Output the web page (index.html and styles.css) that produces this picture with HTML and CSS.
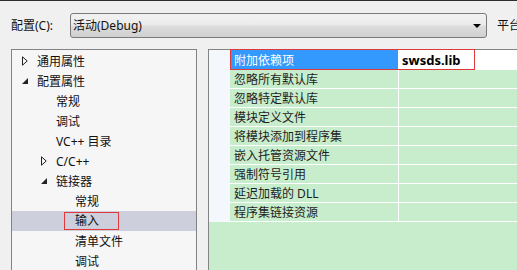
FILE: index.html
```html
<!DOCTYPE html>
<html lang="zh-CN">
<head>
  <meta charset="UTF-8" />
  <title>属性页</title>
  <link rel="stylesheet" href="styles.css">
</head>
<body>

  <!-- 顶部: 配置 / 平台 -->
  <div class="toolbar">
    <span class="label">配置(C):</span>
    <div class="combo">
      <span>活动(Debug)</span>
      <span class="combo-arrow"></span>
    </div>
    <span class="label platform">平台</span>
  </div>

  <div class="main">
    <!-- 左侧树 -->
    <div class="tree">
      <div class="node lv0"><span class="exp"><svg width="6" height="10" viewBox="0 0 6 10"><path d="M0.5 0.8 L5.2 5 L0.5 9.2 Z" fill="none" stroke="#222" stroke-width="1"/></svg></span>通用属性</div>
      <div class="node lv0"><span class="exp"><svg width="7" height="7" viewBox="0 0 7 7"><path d="M6 0 L6 6 L0 6 Z" fill="#222"/></svg></span>配置属性</div>
      <div class="node lv1"><span class="exp"></span>常规</div>
      <div class="node lv1"><span class="exp"></span>调试</div>
      <div class="node lv1"><span class="exp"></span>VC++ 目录</div>
      <div class="node lv1"><span class="exp"><svg width="6" height="10" viewBox="0 0 6 10"><path d="M0.5 0.8 L5.2 5 L0.5 9.2 Z" fill="none" stroke="#222" stroke-width="1"/></svg></span>C/C++</div>
      <div class="node lv1"><span class="exp"><svg width="7" height="7" viewBox="0 0 7 7"><path d="M6 0 L6 6 L0 6 Z" fill="#222"/></svg></span>链接器</div>
      <div class="node lv2"><span class="exp"></span>常规</div>
      <div class="node lv2 selected"><span class="exp"></span><span class="mark">输入</span></div>
      <div class="node lv2"><span class="exp"></span>清单文件</div>
      <div class="node lv2"><span class="exp"></span>调试</div>
    </div>

    <!-- 右侧属性表 -->
    <div class="grid">
      <div class="row active">
        <div class="gutter"></div>
        <div class="name">附加依赖项</div>
        <div class="value">swsds.lib</div>
      </div>
      <div class="row"><div class="gutter"></div><div class="name">忽略所有默认库</div><div class="value"></div></div>
      <div class="row"><div class="gutter"></div><div class="name">忽略特定默认库</div><div class="value"></div></div>
      <div class="row"><div class="gutter"></div><div class="name">模块定义文件</div><div class="value"></div></div>
      <div class="row"><div class="gutter"></div><div class="name">将模块添加到程序集</div><div class="value"></div></div>
      <div class="row"><div class="gutter"></div><div class="name">嵌入托管资源文件</div><div class="value"></div></div>
      <div class="row"><div class="gutter"></div><div class="name">强制符号引用</div><div class="value"></div></div>
      <div class="row"><div class="gutter"></div><div class="name">延迟加载的 DLL</div><div class="value"></div></div>
      <div class="row"><div class="gutter"></div><div class="name">程序集链接资源</div><div class="value"></div></div>
    </div>
  </div>

</body>
</html>
```

FILE: styles.css
```css
html, body {
  margin: 0;
  padding: 0;
  width: 517px;
  height: 270px;
  overflow: hidden;
}

body {
  font-family: "Noto Sans", "Noto Sans CJK SC", sans-serif;
  font-size: 12px;
  color: #111;
  background-color: #f0f0f0;
  border-top: 1px solid #2e2e2e;
  box-sizing: border-box;
}

/* 顶部 */
.toolbar {
  display: flex;
  align-items: center;
  height: 48px;
  padding-left: 11px;
  white-space: nowrap;
}

.label {
  width: 59px;
  flex: none;
}

.platform {
  margin-left: 10px;
}

.combo {
  flex: none;
  width: 417px;
  height: 25px;
  box-sizing: border-box;
  border: 1px solid #7a7a7a;
  border-radius: 3px;
  background: linear-gradient(#f2f2f2, #ebebeb 45%, #dcdcdc 55%, #d0d0d0);
  display: flex;
  align-items: center;
  justify-content: space-between;
  padding: 0 5px 0 2px;
}

.combo-arrow {
  width: 0;
  height: 0;
  border-left: 4px solid transparent;
  border-right: 4px solid transparent;
  border-top: 4px solid #000;
  margin-top: 2px;
}

/* 主体 */
.main {
  display: flex;
  gap: 11px;
  padding-left: 11px;
}

.tree {
  flex: none;
  width: 186px;
  height: 240px;
  box-sizing: border-box;
  border: 1px solid #838383;
  background-color: #f6f6f6;
  padding-top: 1px;
}

.node {
  display: flex;
  align-items: center;
  height: 20px;
  white-space: nowrap;
}

.node.lv0 { padding-left: 10px; }
.node.lv1 { padding-left: 29px; }
.node.lv2 { padding-left: 48px; }

.exp {
  width: 15px;
  flex: none;
  display: flex;
  align-items: center;
}

.node.selected {
  background-color: #cdcfdc;
}

.mark {
  display: inline-block;
  margin-left: -11px;
  padding: 0 19px 0 10px;
  height: 16px;
  line-height: 16px;
  border: 1px solid #e0393b;
}

/* 属性表 */
.grid {
  flex: 1;
  height: 240px;
  border-left: 1px solid #838383;
  border-top: 1px solid #838383;
  background-color: #c7edcc;
}

.row {
  position: relative;
  display: flex;
  height: 19px;
}

.row:first-child {
  height: 20px;
}

.gutter {
  width: 21px;
  flex: none;
  background-color: #f4f7fc;
}

.name {
  width: 169px;
  flex: none;
  padding-left: 4px;
  box-sizing: border-box;
  border-right: 1px solid #fff;
  border-bottom: 1px solid #fff;
  color: #1e1e1e;
  display: flex;
  align-items: center;
  white-space: nowrap;
}

.value {
  flex: 1;
  border-bottom: 1px solid #fff;
  display: flex;
  align-items: center;
  padding-left: 3px;
}

.row.active .name {
  background-color: #3399ff;
  color: #fff;
}

.row.active .value {
  background-color: #fff;
  font-weight: bold;
  font-size: 13px;
  color: #000;
}

/* 红框标注 */
.row.active::after {
  content: "";
  position: absolute;
  left: 21px;
  top: -1px;
  width: 245px;
  height: 21px;
  box-sizing: border-box;
  border: 1px solid #e0393b;
}
```
